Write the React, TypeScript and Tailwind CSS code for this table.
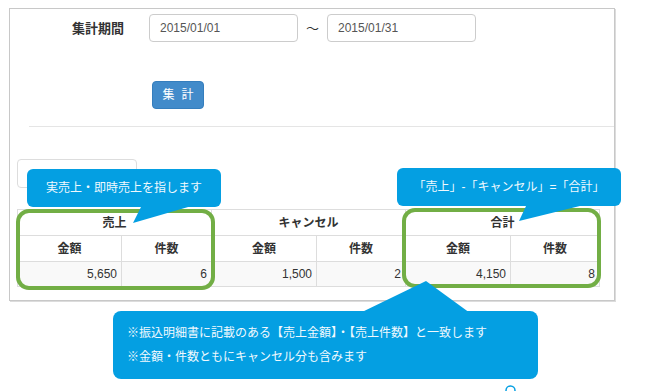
import React from "react";

const FONT = { fontFamily: '"Liberation Sans", "Noto Sans CJK JP", sans-serif' };

export default function App() {
  return (
    <div className="relative w-[646px] h-[391px] overflow-hidden bg-white text-[#333]" style={FONT}>
      {/* panel */}
      <div className="ml-[9px] mt-[8px] w-[606px] h-[293px] border border-[#c8c8c8] shadow-[1px_1px_0_#dcdcdc] flex flex-col">
        <div className="mt-[5px] flex items-center h-[28px]">
          <div className="w-[114px] text-right text-[13px] font-bold leading-none">集計期間</div>
          <div className="ml-[25px] w-[149px] h-[28px] border border-[#ccc] rounded-[4px] pl-[10px] flex items-center text-[12px] text-[#555]">2015/01/01</div>
          <div className="w-[29px] text-center text-[13px] leading-none">～</div>
          <div className="w-[149px] h-[28px] border border-[#ccc] rounded-[4px] pl-[10px] flex items-center text-[12px] text-[#555]">2015/01/31</div>
        </div>
        <div className="ml-[142px] mt-[39px] w-[52px] h-[28px] rounded-[4px] bg-[#428bca] border border-[#357ebd] text-white text-[12px] flex items-center justify-center gap-[7px] leading-none">
          <span>集</span>
          <span>計</span>
        </div>
        <div className="ml-[19px] mt-[17px] h-px bg-[#e5e5e5]" />
        <div className="ml-[7px] mt-[32px] w-[120px] h-[29px] border border-[#ddd] rounded-[4px]" />
        <table className="ml-[7px] mt-[21px] w-[582px] table-fixed border-collapse text-[12px]">
          <colgroup>
            <col className="w-[104px]" />
            <col className="w-[90px]" />
            <col className="w-[105px]" />
            <col className="w-[89px]" />
            <col className="w-[105px]" />
            <col className="w-[89px]" />
          </colgroup>
          <tbody>
            <tr className="h-[26px]">
              <th colSpan={2} className="border border-[#ddd] font-bold text-center p-0">売上</th>
              <th colSpan={2} className="border border-[#ddd] font-bold text-center p-0">キャンセル</th>
              <th colSpan={2} className="border border-[#ddd] font-bold text-center p-0">合計</th>
            </tr>
            <tr className="h-[26px]">
              <th className="border border-[#ddd] font-bold text-center p-0">金額</th>
              <th className="border border-[#ddd] font-bold text-center p-0">件数</th>
              <th className="border border-[#ddd] font-bold text-center p-0">金額</th>
              <th className="border border-[#ddd] font-bold text-center p-0">件数</th>
              <th className="border border-[#ddd] font-bold text-center p-0">金額</th>
              <th className="border border-[#ddd] font-bold text-center p-0">件数</th>
            </tr>
            <tr className="h-[25px] bg-[#f9f9f9]">
              <td className="border border-[#ddd] text-right pr-[4px] py-0">5,650</td>
              <td className="border border-[#ddd] text-right pr-[4px] py-0">6</td>
              <td className="border border-[#ddd] text-right pr-[4px] py-0">1,500</td>
              <td className="border border-[#ddd] text-right pr-[4px] py-0">2</td>
              <td className="border border-[#ddd] text-right pr-[4px] py-0">4,150</td>
              <td className="border border-[#ddd] text-right pr-[4px] py-0">8</td>
            </tr>
          </tbody>
        </table>
      </div>

      {/* green highlight boxes */}
      <div className="absolute left-[16px] top-[209px] w-[199px] h-[81px] border-[4px] border-[#72ae45] rounded-[13px]" />
      <div className="absolute left-[402px] top-[208px] w-[199px] h-[80px] border-[4px] border-[#72ae45] rounded-[13px]" />

      {/* pointers */}
      <svg className="absolute left-0 top-0" width="646" height="391" viewBox="0 0 646 391">
        <polygon points="142,205 195,205 133,223" fill="#049fe2" />
        <polygon points="527,204 588,204 519,221" fill="#049fe2" />
        <polygon points="426,281 360,313 470,313" fill="#049fe2" />
        <circle cx="510.5" cy="390.5" r="4.5" fill="none" stroke="#049fe2" strokeWidth="1.5" />
      </svg>

      {/* tooltips */}
      <div className="absolute left-[27px] top-[169px] w-[194px] h-[38px] rounded-[6px] bg-[#049fe2] text-[#f0f9fe] text-[12px] flex items-center justify-center leading-none">
        実売上・即時売上を指します
      </div>
      <div className="absolute left-[397px] top-[168px] w-[224px] h-[38px] rounded-[6px] bg-[#049fe2] text-[#f0f9fe] text-[12px] flex items-center justify-center leading-none">
        「売上」-「キャンセル」=「合計」
      </div>
      <div className="absolute left-[113px] top-[311px] w-[425px] h-[68px] rounded-[8px] bg-[#049fe2] text-[#f0f9fe] text-[12px] pl-[14px] pt-[10px] leading-[24px]">
        <div>※振込明細書に記載のある【売上金額】・【売上件数】と一致します</div>
        <div>※金額・件数ともにキャンセル分も含みます</div>
      </div>
    </div>
  );
}
